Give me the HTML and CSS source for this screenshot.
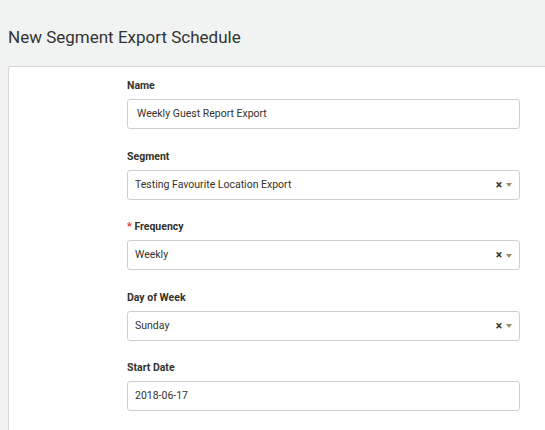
FILE: index.html
```html
<!DOCTYPE html>
<html lang="en">
<head>
    <meta charset="UTF-8">
    <meta name="viewport" content="width=device-width, initial-scale=1.0">
    <title>New Segment Export Schedule</title>
    <link rel="stylesheet" href="styles.css">
</head>
<body>
    <div class="page">
        <h1 class="page-title">New Segment Export Schedule</h1>
        <div class="card">
            <form class="schedule-form">
                <div class="field">
                    <label class="field-label">Name</label>
                    <div class="text-input name-input">Weekly Guest Report Export</div>
                </div>
                <div class="field">
                    <label class="field-label">Segment</label>
                    <div class="select-input">
                        <span class="select-value">Testing Favourite Location Export</span>
                        <span class="select-clear">&times;</span>
                        <span class="select-arrow"></span>
                    </div>
                </div>
                <div class="field">
                    <label class="field-label"><span class="required">*</span> Frequency</label>
                    <div class="select-input">
                        <span class="select-value">Weekly</span>
                        <span class="select-clear">&times;</span>
                        <span class="select-arrow"></span>
                    </div>
                </div>
                <div class="field">
                    <label class="field-label">Day of Week</label>
                    <div class="select-input">
                        <span class="select-value">Sunday</span>
                        <span class="select-clear">&times;</span>
                        <span class="select-arrow"></span>
                    </div>
                </div>
                <div class="field">
                    <label class="field-label">Start Date</label>
                    <div class="text-input">2018-06-17</div>
                </div>
            </form>
        </div>
    </div>
</body>
</html>
```

FILE: styles.css
```css
html, body {
    margin: 0;
    padding: 0;
    overflow: hidden;
}
body {
    font-family: Roboto, "Liberation Sans", Arial, sans-serif;
    background-color: #f0f3f2;
    color: #333;
    height: 430px;
}
.page {
    padding: 0 0 0 8px;
}
.page-title {
    margin: 0;
    padding-top: 27px;
    height: 66px;
    box-sizing: border-box;
    font-size: 17px;
    font-weight: 400;
    line-height: 20px;
    color: #333;
}
/* card runs off the right side, so no right border */
.card {
    height: 380px;
    background-color: #fff;
    border: 1px solid #d3d5d4;
    border-right: none;
    border-radius: 3px 0 0 3px;
}
.schedule-form {
    padding: 12px 0 0 118px;
    width: 393px;
}
.field {
    margin-bottom: 20.5px;
}
.field-label {
    display: block;
    font-size: 10.5px;
    font-weight: 700;
    line-height: 14px;
    margin-bottom: 6px;
    color: #34322a;
}
.required {
    color: #e0301e;
}
.text-input,
.select-input {
    height: 30px;
    border: 1px solid #cfcfcf;
    border-radius: 3px;
    box-sizing: border-box;
    font-size: 10.5px;
    line-height: 28px;
    color: #35332a;
    padding: 0 7px 0 7px;
}
.name-input {
    padding-left: 9px;
}
.select-input {
    display: flex;
    align-items: center;
}
.select-value {
    flex: 1;
}
.select-clear {
    font-size: 12px;
    font-weight: 700;
    color: #2f2f25;
    margin-right: 4px;
}
.select-arrow {
    width: 0;
    height: 0;
    border-left: 3px solid transparent;
    border-right: 3px solid transparent;
    border-top: 4px solid #9a8d68;
    margin-top: 1px;
}
```
